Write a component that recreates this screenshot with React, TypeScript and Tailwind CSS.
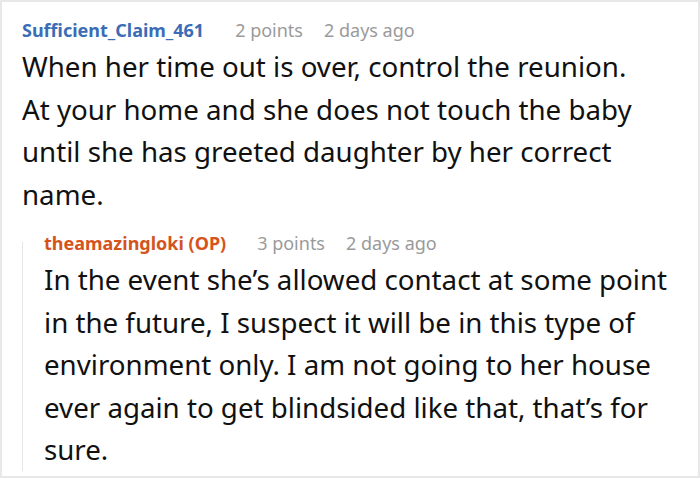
import React from "react";

type HeaderProps = {
  user: string;
  userColor: string;
  points: string;
  age: string;
};

function CommentHeader({ user, userColor, points, age }: HeaderProps) {
  return (
    <div className="flex items-baseline text-[18px] leading-[24px] whitespace-nowrap">
      <span className={`font-bold ${userColor}`}>{user}</span>
      <span className="ml-[31px] text-[#9a9a9a]">{points}</span>
      <span className="ml-[21px] text-[#9a9a9a]">{age}</span>
    </div>
  );
}

function Body({ lines, className = "" }: { lines: string[]; className?: string }) {
  return (
    <p className={`text-[27.7px] leading-[42.5px] text-[#111] ${className}`}>
      {lines.map((l, i) => (
        <span key={i} className="block whitespace-nowrap">
          {l}
        </span>
      ))}
    </p>
  );
}

export default function App() {
  return (
    <div
      className="w-[700px] h-[478px] bg-white border-2 border-[#e8e8e8] overflow-hidden"
      style={{ fontFamily: '"Noto Sans", "Open Sans", sans-serif' }}
    >
      <div className="pl-[20px] pt-[16px] pr-[20px]">
        <CommentHeader
          user="Sufficient_Claim_461"
          userColor="text-[#3b6db6]"
          points="2 points"
          age="2 days ago"
        />
        <Body
          className="mt-[3px]"
          lines={[
            "When her time out is over, control the reunion.",
            "At your home and she does not touch the baby",
            "until she has greeted daughter by her correct",
            "name.",
          ]}
        />

        <div className="mt-[27px] flex flex-col border-l border-[#e6e6e6] pl-[21px]">
          <div className="-mt-[11px]">
            <CommentHeader
              user="theamazingloki (OP)"
              userColor="text-[#d4541c]"
              points="3 points"
              age="2 days ago"
            />
          </div>
          <Body
            className="mt-[3px]"
            lines={[
              "In the event she’s allowed contact at some point",
              "in the future, I suspect it will be in this type of",
              "environment only. I am not going to her house",
              "ever again to get blindsided like that, that’s for",
              "sure.",
            ]}
          />
        </div>
      </div>
    </div>
  );
}
